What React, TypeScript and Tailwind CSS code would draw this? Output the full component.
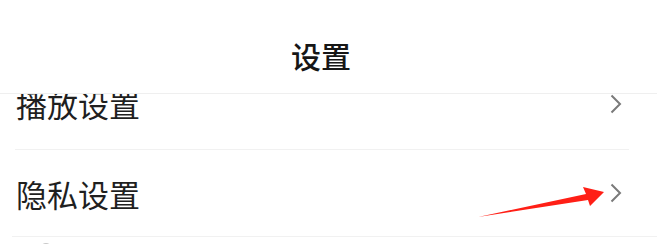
import React from 'react';

const font = { fontFamily: '"Noto Sans CJK SC", "Noto Sans", sans-serif' };

const Chevron: React.FC = () => (
    <svg width="12" height="20" viewBox="0 0 12 20" className="shrink-0">
        <path d="M1.5 1.5 L10 10 L1.5 18.5" fill="none" stroke="#7a7a7a" strokeWidth="2" />
    </svg>
);

const App: React.FC = () => {
    return (
        <div className="relative w-[657px] h-[244px] overflow-hidden bg-white text-[#1f1f1f]" style={font}>
            {/* header */}
            <header className="h-[94px] border-b border-[#efefef] flex justify-center pt-[33px] pr-[15px]">
                <h1 className="text-[30px] leading-[44px] font-medium text-[#161616]">设置</h1>
            </header>

            {/* list, scrolled a little under the header */}
            <div className="h-[150px] overflow-hidden">
                <div className="-mt-[33px]">
                    <div className="h-[88px] flex items-center justify-between pl-[16px] pr-[35px] pb-[3px]">
                        <span className="text-[31px] leading-none">播放设置</span>
                        <Chevron />
                    </div>
                    <div className="h-px bg-[#f1f1f1] ml-[15px] mr-[28px]" />
                    <div className="h-[86px] flex items-center justify-between pl-[16px] pr-[35px]">
                        <span className="text-[31px] leading-none">隐私设置</span>
                        <Chevron />
                    </div>
                    <div className="h-px bg-[#f1f1f1] ml-[12px]" />
                    <div className="h-[60px] pl-[40px] pt-[6px]">
                        <div className="w-[12px] h-[12px] rounded-full bg-[#c8c8c8]" />
                    </div>
                </div>
            </div>

            {/* red annotation arrow */}
            <svg className="absolute left-0 top-0 pointer-events-none" width="657" height="244" viewBox="0 0 657 244">
                <polygon
                    points="478,217 586,194 583,187 604,192 590,206 588,200"
                    fill="#ff1f16"
                />
            </svg>
        </div>
    );
};

export default App;
